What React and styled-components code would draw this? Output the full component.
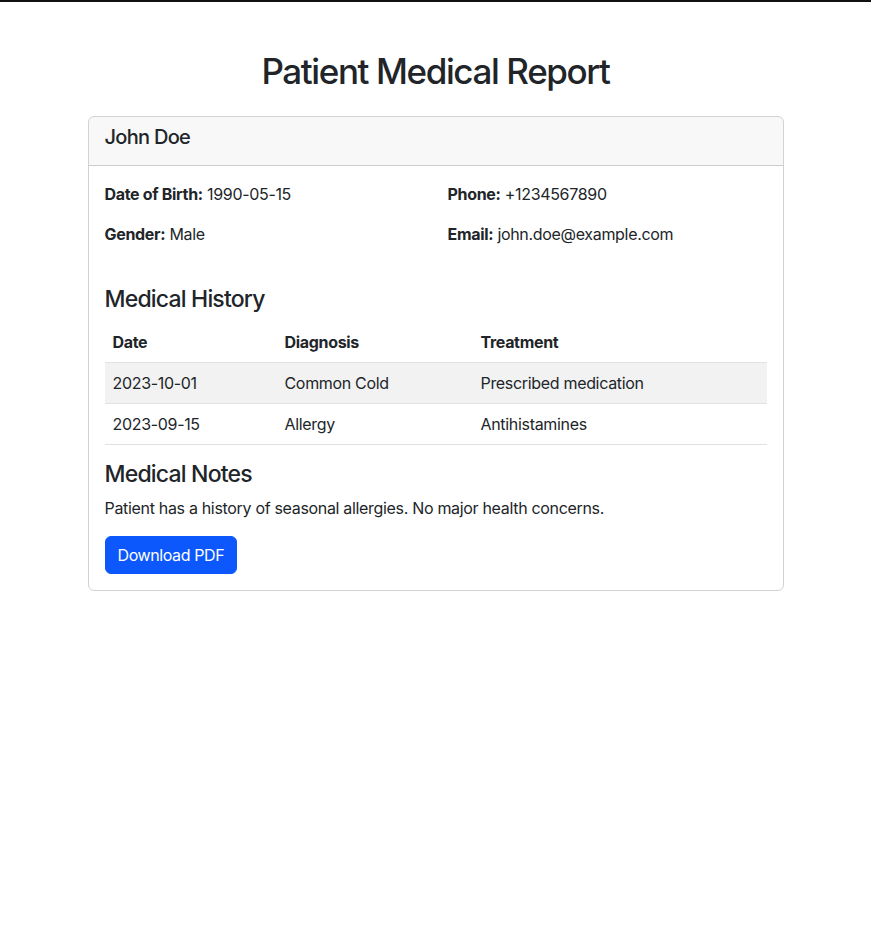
import React from 'react';
import styled, { createGlobalStyle } from 'styled-components';

const GlobalStyle = createGlobalStyle`
	* { box-sizing: border-box; }
	body {
		margin: 0;
		border-top: 2px solid #111;
		font-family: Inter, "Noto Sans", "Liberation Sans", sans-serif;
		font-size: 16px;
		line-height: 1.5;
		letter-spacing: -0.02em;
		color: #212529;
		background: #fff;
	}
`;

const Container = styled.div`
	max-width: 720px;
	margin: 48px auto 0;
	padding: 0 12px;
`;

const Title = styled.h1`
	margin: 0 0 24px;
	text-align: center;
	font-size: 35px;
	font-weight: 500;
	line-height: 1.2;
	letter-spacing: -0.04em;
`;

const Card = styled.div`
	border: 1px solid rgba(0, 0, 0, 0.175);
	border-radius: 6px;
	overflow: hidden;
`;

const CardHeader = styled.div`
	padding: 8px 16px;
	background: rgba(33, 37, 41, 0.03);
	border-bottom: 1px solid rgba(0, 0, 0, 0.175);
`;

const Name = styled.h5`
	margin: 0 0 8px;
	font-size: 20px;
	font-weight: 500;
	line-height: 1.2;
	letter-spacing: -0.035em;
`;

const CardBody = styled.div`
	padding: 16px;
`;

const InfoGrid = styled.div`
	display: grid;
	grid-template-columns: 1fr 1fr;
	column-gap: 24px;
`;

const Info = styled.p`
	margin: 0 0 16px;

	strong { font-weight: 700; }
`;

const SectionTitle = styled.h4`
	margin: ${p => (p.$spaced ? '24px' : '0')} 0 8px;
	font-size: 23px;
	font-weight: 500;
	line-height: 1.2;
	letter-spacing: -0.035em;
`;

const Table = styled.table`
	width: 100%;
	margin-bottom: 16px;
	border-collapse: collapse;
	table-layout: fixed;

	th, td {
		padding: 8px;
		text-align: left;
		border-bottom: 1px solid #dee2e6;
	}
	th { font-weight: 700; }
	tbody tr:nth-child(odd) td { background: rgba(0, 0, 0, 0.05); }
`;

const Notes = styled.p`
	margin: 0 0 16px;
`;

const Button = styled.button`
	display: inline-block;
	padding: 6px 12px;
	font: inherit;
	font-size: 16px;
	line-height: 24px;
	letter-spacing: -0.025em;
	color: #fff;
	background: #0c58fc;
	border: 1px solid #0c58fc;
	border-radius: 6px;
	cursor: pointer;
`;

const history = [
	{ date: '2023-10-01', diagnosis: 'Common Cold', treatment: 'Prescribed medication' },
	{ date: '2023-09-15', diagnosis: 'Allergy', treatment: 'Antihistamines' },
];

export default function App() {
	return (
		<>
			<GlobalStyle />
			<Container>
				<Title>Patient Medical Report</Title>
				<Card>
					<CardHeader>
						<Name>John Doe</Name>
					</CardHeader>
					<CardBody>
						<InfoGrid>
							<Info><strong>Date of Birth:</strong> 1990-05-15</Info>
							<Info><strong>Phone:</strong> +1234567890</Info>
							<Info><strong>Gender:</strong> Male</Info>
							<Info><strong>Email:</strong> john.doe@example.com</Info>
						</InfoGrid>

						<SectionTitle $spaced>Medical History</SectionTitle>
						<Table>
							<colgroup>
								<col style={{ width: 172 }} />
								<col style={{ width: 196 }} />
								<col />
							</colgroup>
							<thead>
								<tr>
									<th>Date</th>
									<th>Diagnosis</th>
									<th>Treatment</th>
								</tr>
							</thead>
							<tbody>
								{history.map((row, i) => (
									<tr key={i}>
										<td>{row.date}</td>
										<td>{row.diagnosis}</td>
										<td>{row.treatment}</td>
									</tr>
								))}
							</tbody>
						</Table>

						<SectionTitle>Medical Notes</SectionTitle>
						<Notes>Patient has a history of seasonal allergies. No major health concerns.</Notes>
						<Button>Download PDF</Button>
					</CardBody>
				</Card>
			</Container>
		</>
	);
}
